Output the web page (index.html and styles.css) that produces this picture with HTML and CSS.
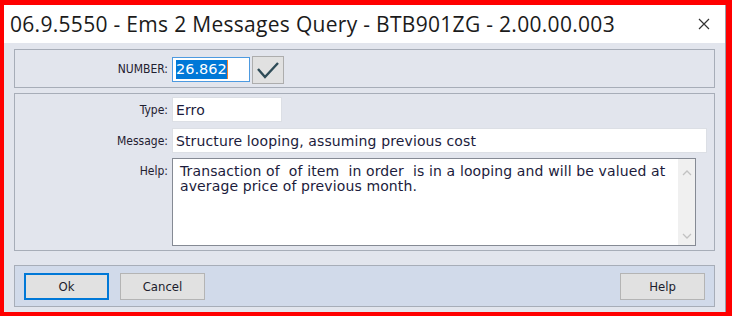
FILE: index.html
```html
<!DOCTYPE html>
<html lang="en">
<head>
    <meta charset="UTF-8">
    <title>Ems 2 Messages Query</title>
    <link rel="stylesheet" href="styles.css">
</head>
<body>

<div class="window">
    <div class="titlebar">
        <span class="title">06.9.5550 - Ems 2 Messages Query - BTB901ZG - 2.00.00.003</span>
        <span class="close">
            <svg width="12" height="12" viewBox="0 0 12 12"><path d="M1 1 L11 11 M11 1 L1 11" stroke="#333" stroke-width="1.2" fill="none"/></svg>
        </span>
    </div>

    <div class="content">
        <div class="panel panel-search">
            <label class="label">NUMBER:</label>
            <div class="field field-number"><span class="sel">26.862</span><span class="caret"></span></div>
            <button class="btn-check">
                <svg width="24" height="18" viewBox="0 0 24 18"><path d="M2 8 L9 16 L22 2" stroke="#2e4b57" stroke-width="2.4" fill="none"/></svg>
            </button>
        </div>

        <div class="panel panel-detail">
            <label class="label">Type:</label>
            <div class="field field-type">Erro</div>

            <label class="label">Message:</label>
            <div class="field field-message">Structure looping, assuming previous cost</div>

            <label class="label label-top">Help:</label>
            <div class="memo">
                <div class="memo-text">Transaction of&nbsp; of item&nbsp; in order&nbsp; is in a looping and will be valued at average price of previous month.</div>
                <div class="scrollbar">
                    <svg width="10" height="6" viewBox="0 0 10 6"><path d="M1 5 L5 1 L9 5" stroke="#c2c2c2" stroke-width="1.3" fill="none"/></svg>
                    <svg width="10" height="6" viewBox="0 0 10 6"><path d="M1 1 L5 5 L9 1" stroke="#c2c2c2" stroke-width="1.3" fill="none"/></svg>
                </div>
            </div>
        </div>

        <div class="panel panel-buttons">
            <button class="btn btn-default">Ok</button>
            <button class="btn">Cancel</button>
            <span class="spacer"></span>
            <button class="btn">Help</button>
        </div>
    </div>
</div>

</body>
</html>
```

FILE: styles.css
```css
body {
    margin: 0;
    background: #ff0000;
    font-family: "DejaVu Sans", Verdana, sans-serif;
}
.window {
    margin: 5px 6px 4px 4px;
    height: 307px;
    background: #e2e5ed;
    border-right: 1px solid #9aa0aa;
    display: flex;
    flex-direction: column;
}
.titlebar {
    height: 38px;
    background: #ffffff;
    display: flex;
    align-items: center;
    padding: 0 14px 0 6px;
}
.title {
    flex: 1;
    font-family: "Open Sans", "Noto Sans", sans-serif;
    font-size: 21px;
    color: #1b1b1b;
    letter-spacing: 0.3px;
}
.close {
    display: flex;
    margin-right: 1px;
}
.content {
    flex: 1;
    padding: 6px 10px 5px 10px;
    display: flex;
    flex-direction: column;
}
.panel {
    border: 1px solid #a7adb8;
}
.label {
    font-family: "DejaVu Sans Condensed", "DejaVu Sans", sans-serif;
    font-size: 12px;
    color: #1f2030;
    text-align: right;
}
.field {
    box-sizing: border-box;
    height: 25px;
    background: #ffffff;
    border: 1px solid #dcdfe5;
    font-size: 14px;
    letter-spacing: 0.12px;
    color: #1c1c3c;
    padding: 0 3px;
    display: flex;
    align-items: center;
}

/* number row */
.panel-search {
    height: 39px;
    box-sizing: border-box;
    display: grid;
    grid-template-columns: 153px 78px 31px;
    column-gap: 4px;
    align-items: center;
}
.field-number {
    border: 1px solid #4d9ae0;
    padding-left: 3px;
    margin-top: 2px;
    font-size: 14.5px;
    letter-spacing: 0;
}
.sel {
    background: #0078d7;
    color: #ffffff;
    line-height: 19px;
}
.caret {
    width: 1px;
    height: 19px;
    background: #f08030;
}
.btn-check {
    margin-left: -2px;
    height: 28px;
    width: 32px;
    margin-top: 3px;
    background: #e1e1e1;
    border: 1px solid #adadad;
    padding: 0;
    display: flex;
    align-items: center;
    justify-content: center;
}

/* detail panel */
.panel-detail {
    margin-top: 5px;
    height: 158px;
    box-sizing: border-box;
    padding: 3px 7px 4px 0;
    display: grid;
    grid-template-columns: 153px 1fr;
    grid-template-rows: 25px 25px 1fr;
    column-gap: 4px;
    row-gap: 6px;
    align-items: center;
}
.label-top {
    align-self: start;
    padding-top: 5px;
}
.field-type {
    width: 110px;
}
.memo {
    align-self: stretch;
    margin-top: -1px;
    margin-right: 11px;
    background: #ffffff;
    border: 1px solid #858a94;
    display: flex;
}
.memo-text {
    flex: 1;
    font-size: 14px;
    letter-spacing: 0.12px;
    line-height: 15px;
    color: #1c1c3c;
    padding: 5px 6px 5px 7px;
}
.scrollbar {
    width: 17px;
    background: #f0f0f0;
    display: flex;
    flex-direction: column;
    justify-content: space-between;
    align-items: center;
    padding: 11px 0 6px;
}

/* button bar */
.panel-buttons {
    margin-top: 14px;
    height: 42px;
    box-sizing: border-box;
    background: #d1daea;
    padding: 0 9px;
    display: flex;
    align-items: center;
    gap: 11px;
}
.spacer {
    flex: 1;
}
.btn {
    width: 85px;
    height: 27px;
    background: #e1e1e1;
    border: 1px solid #b4b4b4;
    font-family: "DejaVu Sans Condensed", "DejaVu Sans", sans-serif;
    font-size: 13px;
    color: #1c1c2c;
    padding: 0;
}
.btn-default {
    border: 2px solid #0078d7;
}
```
